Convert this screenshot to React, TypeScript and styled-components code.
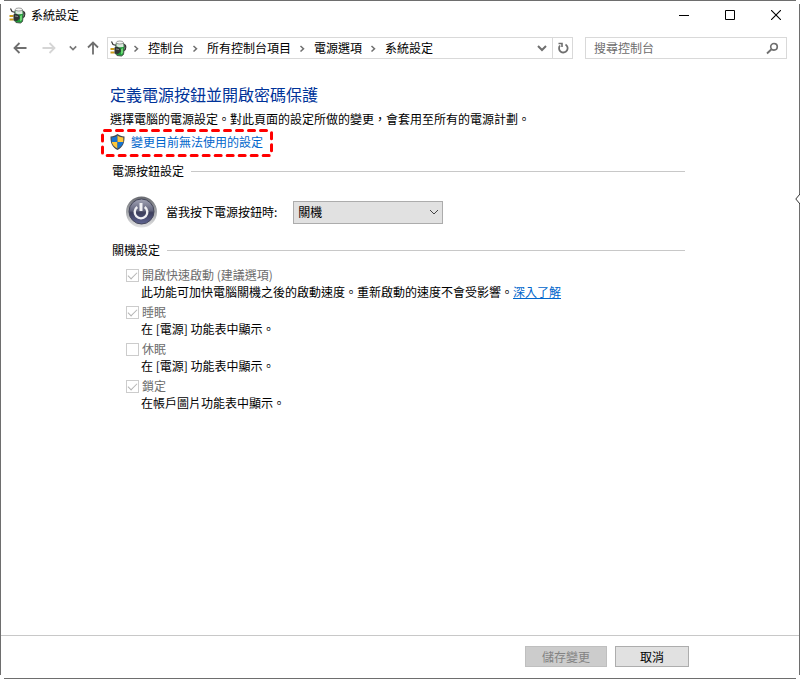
import React from 'react';
import styled, { createGlobalStyle, css } from 'styled-components';

const GlobalStyle = createGlobalStyle`
  *, *::before, *::after { box-sizing: border-box; }
  body {
    margin: 0;
    background: #fff;
    color: #000;
    font: 12px/18px "Noto Sans CJK TC", sans-serif;
  }
  button, input, select { font: inherit; color: inherit; margin: 0; }
`;

const line = 'linear-gradient(#6e6e6e, #6e6e6e)';

const Window = styled.div`
  position: relative;
  display: flex;
  flex-direction: column;
  min-height: 100vh;
  padding: 1px;
  background:
    ${line} center top / calc(100% - 8px) 1px no-repeat,
    ${line} center bottom / calc(100% - 8px) 1px no-repeat,
    ${line} left center / 1px calc(100% - 8px) no-repeat,
    ${line} right center / 1px calc(100% - 8px) no-repeat,
    #fff;
`;

const EdgeMarker = styled.svg`
  position: absolute;
  right: 0;
  top: 193px;
`;

const TitleBar = styled.header`
  display: flex;
  align-items: center;
  height: 28px;
  padding-left: 8px;
`;

const WindowTitle = styled.h1`
  flex: 1;
  margin: 0 0 0 5px;
  font-size: 12px;
  font-weight: 400;
`;

const CaptionButton = styled.button`
  display: grid;
  place-items: center;
  width: 46px;
  height: 28px;
  padding: 0;
  border: 0;
  background: none;
`;

const NavBar = styled.nav`
  display: flex;
  align-items: center;
  padding: 8px 12px 0 9px;
`;

const NavButton = styled.button<{ $width: number }>`
  display: grid;
  place-items: center;
  width: ${(p) => p.$width}px;
  height: 22px;
  padding: 0;
  border: 0;
  background: none;
`;

const AddressBar = styled.div`
  display: flex;
  flex: 1;
  align-items: center;
  height: 22px;
  padding-left: 2px;
  border: 1px solid #d9d9d9;
`;

const Crumbs = styled.ol`
  display: flex;
  flex: 1;
  margin: 0;
  padding: 0;
  list-style: none;
`;

const Crumb = styled.li`
  display: flex;
  align-items: center;
  white-space: nowrap;

  a { color: inherit; text-decoration: none; }
  svg { margin: 0 8px 0 7px; }
  &:first-child svg { margin-left: 5px; }
`;

const RefreshButton = styled(NavButton)`
  height: 20px;
  border-left: 1px solid #d9d9d9;
`;

const SearchBox = styled.label`
  display: flex;
  align-items: center;
  width: 202px;
  height: 22px;
  margin-left: 12px;
  padding: 0 7px 0 8px;
  border: 1px solid #d9d9d9;
`;

const SearchInput = styled.input`
  flex: 1;
  min-width: 0;
  height: 18px;
  padding: 0;
  border: 0;
  outline: 0;
  background: none;
  &::placeholder { color: #6d6d6d; opacity: 1; }
`;

const Main = styled.main`
  flex: 1;
  padding: 23px 114px 24px 109px;
`;

const Heading = styled.h2`
  margin: 0;
  color: #003399;
  font-size: 16px;
  font-weight: 400;
  line-height: 24px;
`;

const Intro = styled.p`
  margin: 4px 0 0;
`;

const Highlight = styled.div`
  position: relative;
  width: fit-content;
  margin: 1px 0 0 -9px;
  padding: 4px 10px 6px 9px;
`;

const DashedOutline = styled.svg`
  position: absolute;
  inset: 0;
  width: 100%;
  height: 100%;
  pointer-events: none;
`;

const ElevatedLink = styled.a`
  display: flex;
  align-items: center;
  gap: 6px;
  color: #0066cc;
  text-decoration: none;
`;

const Section = styled.section`
  padding-left: 2px;
`;

const SectionTitle = styled.h3<{ $gap: number }>`
  display: flex;
  align-items: center;
  gap: 7px;
  margin: ${(p) => p.$gap}px 0 0;
  font-size: 12px;
  font-weight: 400;

  &::after {
    content: '';
    flex: 1;
    height: 1px;
    background: #c8c8c8;
  }
`;

const PowerRow = styled.div`
  display: flex;
  align-items: center;
  padding: 16px 0 0 14px;

  label { margin: 0 16px 0 8px; }
`;

const SelectWrap = styled.div`
  display: grid;
  align-items: center;
  width: 150px;

  > * { grid-area: 1 / 1; }
  svg { justify-self: end; margin-right: 4px; pointer-events: none; }
`;

const Select = styled.select`
  appearance: none;
  width: 100%;
  height: 23px;
  padding: 0 20px 0 4px;
  border: 1px solid #acacac;
  border-radius: 0;
  background: #e1e1e1;
`;

const Options = styled.ul`
  margin: 8px 0 0;
  padding: 0 0 0 14px;
  list-style: none;
`;

const Option = styled.li`
  padding-bottom: 3px;
`;

const OptionLabel = styled.label`
  display: flex;
  align-items: center;
  gap: 3px;
  color: #6d6d6d;
  line-height: 16px;
`;

const CheckBox = styled.input`
  appearance: none;
  width: 13px;
  height: 13px;
  border: 1px solid #ccc;
  background: #fff;

  &:checked::before {
    content: '';
    display: block;
    width: 9px;
    height: 5px;
    margin: 2px 0 0 1px;
    border: solid #b4b4b4;
    border-width: 0 0 1px 1px;
    transform: rotate(-45deg);
  }
`;

const OptionNote = styled.p`
  margin: 0 0 0 15px;

  a { color: #0066cc; }
`;

const Footer = styled.footer`
  display: flex;
  justify-content: flex-end;
  gap: 8px;
  padding: 10px 110px 11px;
  border-top: 1px solid #c8c8c8;
`;

const ActionButton = styled.button<{ $width: number }>`
  width: ${(p) => p.$width}px;
  height: 21px;
  padding: 0;
  border: 1px solid #adadad;
  background: #e1e1e1;
  line-height: 19px;

  ${(p) => p.disabled && css`
    border-color: #bfbfbf;
    background: #ccc;
    color: #838383;
  `}
`;

const PlugIcon = () => (
  <svg width="17" height="17" viewBox="0 0 17 17" aria-hidden="true">
    <path d="M1.500 1.500 3 4.500 6.500 5.500" fill="none" stroke="#333" strokeWidth="1.200" />
    <path d="M6 3.500 13.500 3l1 3-1 8.500-2 1.500-4.500-.5-1.500-2Z" fill="#1f9a3a" stroke="#4d574f" />
    <path d="M6.500 3.500h7V7l-7 .5Z" fill="#dce9de" />
    <ellipse cx="9.800" cy="2.500" rx="3.500" ry="1.500" fill="#f5f7f5" stroke="#777" strokeWidth=".7" />
    <path d="M11 9 13 8v5l-2 1.500Z" fill="#6ad772" />
    <path d="M13.800 4.500c2.700 0 2.500 5 .2 6" fill="none" stroke="#333" strokeWidth="1.200" />
    <path d="M.5 9h4M.5 12.500h4" stroke="#c99b1b" strokeWidth="1.800" />
    <path d="M4.500 7.500 7 6.500 10.500 8.500l.3 3L8 14l-3.500-.5Z" fill="#303433" />
    <path d="M6 9 9 9.500" stroke="#858c88" />
  </svg>
);

const ChevronRight = () => (
  <svg width="8" height="9" viewBox="0 0 8 9" aria-hidden="true">
    <path d="m2.500 2 3 2.700-3 2.800" fill="none" stroke="#6f6f6f" strokeWidth="1.500" />
  </svg>
);

const ChevronDown = ({ size, color, weight }: { size: number; color: string; weight: number }) => (
  <svg width={size} height={size} viewBox="0 0 10 10" aria-hidden="true">
    <path d="m1 3 4 4 4-4" fill="none" stroke={color} strokeWidth={weight} />
  </svg>
);

const Arrow = ({ turn, color }: { turn: number; color: string }) => (
  <svg width="14" height="14" viewBox="0 0 14 14" aria-hidden="true">
    <g transform={`rotate(${turn} 7 7)`} fill="none" stroke={color} strokeWidth="1.800">
      <path d="M1.500 7h12M6.500 2 1.500 7l5 5" />
    </g>
  </svg>
);

const ShieldIcon = () => (
  <svg width="15" height="16" viewBox="0 0 15 16" aria-hidden="true">
    <path d="M7.500 0C5.500 1.700 3 2.300.500 2.400.300 9 2.300 13.300 7.500 16 12.700 13.300 14.700 9 14.500 2.400 12 2.300 9.500 1.700 7.500 0Z" fill="#444b52" />
    <path d="M7.500 1.600C5.500 3 4 3.400 1.700 3.600V8h5.800Z" fill="#1773d1" />
    <path d="M7.500 1.600c2 1.400 3.500 1.800 5.800 2V8H7.500Z" fill="#ffc83a" />
    <path d="M1.800 8h5.700v6.600C4.300 12.900 2.300 11 1.800 8Z" fill="#ffc83a" />
    <path d="M13.200 8H7.500v6.600C10.700 12.900 12.700 11 13.200 8Z" fill="#1773d1" />
  </svg>
);

const PowerIcon = () => (
  <svg width="32" height="32" viewBox="0 0 32 32" aria-hidden="true">
    <defs>
      <linearGradient id="rim" x2="0" y2="1">
        <stop stopColor="#686a70" />
        <stop offset=".5" stopColor="#a6a8ac" />
        <stop offset="1" stopColor="#e2e2e3" />
      </linearGradient>
      <linearGradient id="face" x2="0" y2="1">
        <stop stopColor="#a3a5b6" />
        <stop offset=".45" stopColor="#65677f" />
        <stop offset=".55" stopColor="#3c3e5c" />
        <stop offset="1" stopColor="#5e6391" />
      </linearGradient>
    </defs>
    <circle cx="15.500" cy="16" r="15.500" fill="url(#rim)" />
    <circle cx="15.500" cy="15.500" r="12.500" fill="url(#face)" stroke="#44465a" />
    <path d="M11.300 11a6.300 6.300 0 1 0 7.400 0" fill="none" stroke="#f0f0f4" strokeWidth="2.400" />
    <path d="M15 7v8" stroke="#f0f0f4" strokeWidth="3" />
  </svg>
);

const crumbs = ['控制台', '所有控制台項目', '電源選項', '系統設定'];

const options = [
  {
    label: '開啟快速啟動 (建議選項)',
    note: '此功能可加快電腦關機之後的啟動速度。重新啟動的速度不會受影響。',
    link: '深入了解',
    checked: true,
  },
  { label: '睡眠', note: '在 [電源] 功能表中顯示。', checked: true },
  { label: '休眠', note: '在 [電源] 功能表中顯示。', checked: false },
  { label: '鎖定', note: '在帳戶圖片功能表中顯示。', checked: true },
];

export default function App() {
  return (
    <>
      <GlobalStyle />
      <Window>
        <TitleBar>
          <PlugIcon />
          <WindowTitle>系統設定</WindowTitle>
          <CaptionButton aria-label="最小化">
            <svg width="10" height="10"><path d="M0 5.500h10" stroke="#000" /></svg>
          </CaptionButton>
          <CaptionButton aria-label="最大化">
            <svg width="10" height="10"><path d="M.5.5h9v9h-9Z" fill="none" stroke="#000" /></svg>
          </CaptionButton>
          <CaptionButton aria-label="關閉">
            <svg width="10" height="10"><path d="m0 0 10 10M10 0 0 10" stroke="#000" strokeWidth="1.100" /></svg>
          </CaptionButton>
        </TitleBar>

        <NavBar>
          <NavButton $width={20} aria-label="上一頁"><Arrow turn={0} color="#6f6f6f" /></NavButton>
          <NavButton $width={38} aria-label="下一頁" disabled><Arrow turn={180} color="#d5d5d5" /></NavButton>
          <NavButton $width={10} aria-label="最近的位置"><ChevronDown size={8} color="#777" weight={2} /></NavButton>
          <NavButton $width={29} aria-label="上移"><Arrow turn={90} color="#6f6f6f" /></NavButton>
          <AddressBar>
            <PlugIcon />
            <Crumbs>
              {crumbs.map((name) => (
                <Crumb key={name}>
                  <ChevronRight />
                  <a href="#">{name}</a>
                </Crumb>
              ))}
            </Crumbs>
            <NavButton $width={20} aria-label="先前的位置"><ChevronDown size={10} color="#6f6f6f" weight={2} /></NavButton>
            <RefreshButton $width={20} aria-label="重新整理">
              <svg width="12" height="12" viewBox="0 0 12 12">
                <path d="M8.500 2.500A4.300 4.300 0 1 1 3 3.500" fill="none" stroke="#6f6f6f" strokeWidth="1.800" />
                <path d="M1.500 1.500H5V5" fill="none" stroke="#6f6f6f" strokeWidth="1.600" />
              </svg>
            </RefreshButton>
          </AddressBar>
          <SearchBox>
            <SearchInput type="text" placeholder="搜尋控制台" aria-label="搜尋控制台" />
            <svg width="13" height="13" viewBox="0 0 13 13" aria-hidden="true">
              <circle cx="8" cy="4.800" r="3.300" fill="none" stroke="#6f6f6f" strokeWidth="1.600" />
              <path d="M5.500 7.300 1 11.500" stroke="#6f6f6f" strokeWidth="1.900" />
            </svg>
          </SearchBox>
        </NavBar>

        <Main>
          <Heading>定義電源按鈕並開啟密碼保護</Heading>
          <Intro>選擇電腦的電源設定。對此頁面的設定所做的變更，會套用至所有的電源計劃。</Intro>
          <Highlight>
            <ElevatedLink href="#">
              <ShieldIcon />
              變更目前無法使用的設定
            </ElevatedLink>
            <DashedOutline viewBox="0 0 172 28" preserveAspectRatio="none" aria-hidden="true">
              <rect x="1.500" y="1.500" width="169" height="25" rx="2" fill="none" stroke="#f00" strokeWidth="3" strokeLinecap="round" strokeDasharray="6 6" />
            </DashedOutline>
          </Highlight>

          <Section>
            <SectionTitle $gap={5}>電源按鈕設定</SectionTitle>
            <PowerRow>
              <PowerIcon />
              <label htmlFor="power-button">當我按下電源按鈕時:</label>
              <SelectWrap>
                <Select id="power-button" defaultValue="關機">
                  <option>關機</option>
                </Select>
                <ChevronDown size={10} color="#444" weight={1} />
              </SelectWrap>
            </PowerRow>
          </Section>

          <Section>
            <SectionTitle $gap={13}>關機設定</SectionTitle>
            <Options>
              {options.map((option) => (
                <Option key={option.label}>
                  <OptionLabel>
                    <CheckBox type="checkbox" defaultChecked={option.checked} disabled />
                    {option.label}
                  </OptionLabel>
                  <OptionNote>
                    {option.note}
                    {option.link && <a href="#">{option.link}</a>}
                  </OptionNote>
                </Option>
              ))}
            </Options>
          </Section>
        </Main>

        <Footer>
          <ActionButton $width={82} disabled>儲存變更</ActionButton>
          <ActionButton $width={74}>取消</ActionButton>
        </Footer>

        <EdgeMarker width="5" height="12" viewBox="0 0 5 12" aria-hidden="true">
          <path d="M5 1 .8 6 5 11" fill="#fff" stroke="#333" />
        </EdgeMarker>
      </Window>
    </>
  );
}
